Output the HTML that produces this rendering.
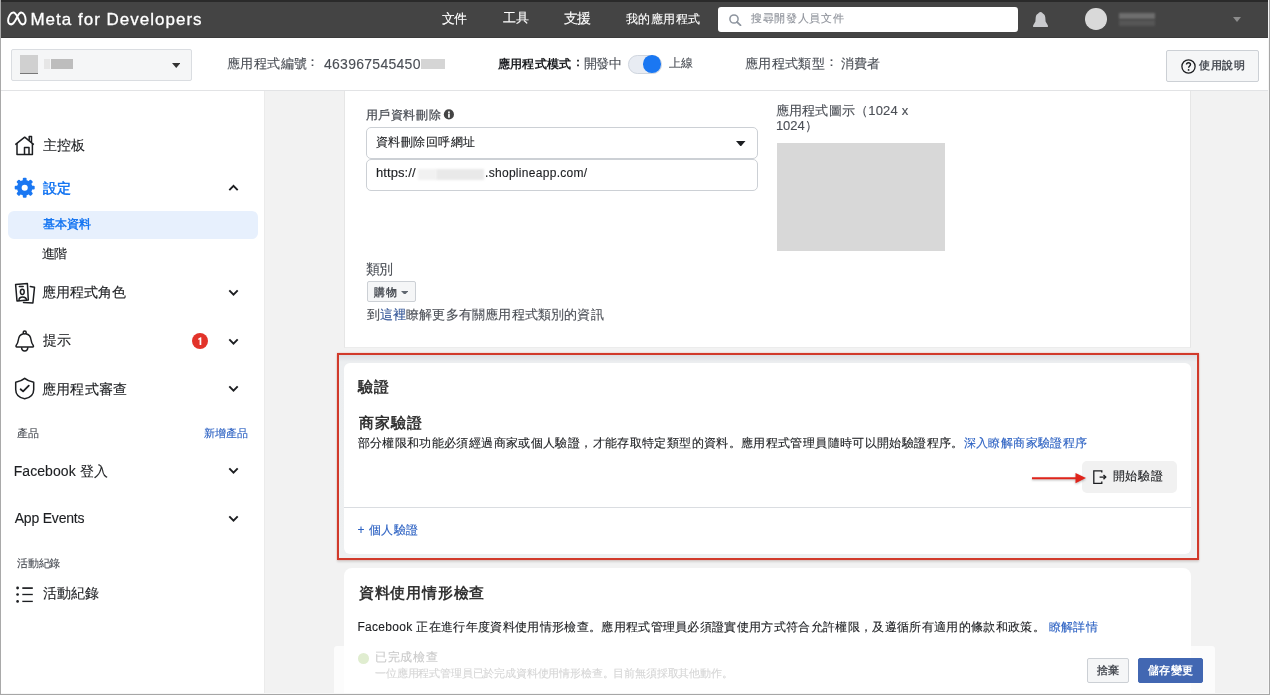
<!DOCTYPE html>
<html><head><meta charset="utf-8">
<style>
*{box-sizing:border-box;margin:0;padding:0}
html,body{width:1270px;height:695px;overflow:hidden}
body{position:relative;background:#f2f2f2;font-family:"Liberation Sans",sans-serif;color:#1c1e21}
.a{position:absolute;white-space:nowrap;line-height:1.25}
.t{-webkit-text-stroke:0.12px currentColor}
#root{position:absolute;left:0;top:0;width:1270px;height:695px;will-change:transform}
</style></head><body><div id="root">
<div class="a" style="left:0;top:0;width:1270px;height:2px;background:#2a2a2a"></div>
<div class="a" style="left:0;top:2px;width:1270px;height:35px;background:#444"></div>
<div class="a" style="left:0;top:37px;width:1270px;height:1px;background:#3b3b3b"></div>
<svg class="a" style="left:4.9px;top:8px" width="30" height="22" viewBox="0 0 33 22" preserveAspectRatio="none"><path d="M9.2 4.5C11.2 4.5 12.4 6.6 13.6 8.8 14.9 11.3 16.6 16.4 19.2 16.4 21.4 16.4 22.7 14.5 22.7 12 22.7 7.9 20.3 4.5 17.8 4.5 15.8 4.5 14.6 6.6 13.6 8.6 12.3 11.1 9.9 16.4 6.7 16.4 4.6 16.4 3.4 14.8 3.4 12.7 3.4 9 6.1 4.5 9.2 4.5Z" fill="none" stroke="#fff" stroke-width="2.1" stroke-linejoin="round"/></svg>
<div class="a" style="left:718px;top:7px;width:300px;height:25px;background:#fff;border-radius:3px"></div>
<svg class="a" style="left:729px;top:14px" width="13" height="12" viewBox="0 0 13 12"><circle cx="5" cy="5" r="4.1" fill="none" stroke="#8d949e" stroke-width="1.5"/><path d="M8 8L11.6 11.3" stroke="#8d949e" stroke-width="1.7" stroke-linecap="round"/></svg>
<svg class="a" style="left:1032px;top:11px" width="17" height="17" viewBox="0 0 17 17"><path d="M8.6 0.9C7.4 0.9 6.8 1.9 6.2 2.4 4.6 3 3.9 4.6 3.7 6.6L3.4 10.6 1.1 14.4V16H15.9V14.4L13.6 10.6 13.3 6.6C13.1 4.6 12.4 3 10.9 2.4 10.3 1.9 9.8 0.9 8.6 0.9Z" fill="#c9cacd"/></svg>
<div class="a" style="left:1085px;top:8px;width:21.5px;height:21.5px;border-radius:50%;background:#d9d9d9"></div>
<div class="a" style="left:1119px;top:13px;width:36px;height:6px;background:#6e6e6e;filter:blur(0.8px)"></div>
<div class="a" style="left:1119px;top:19.5px;width:36px;height:6px;background:#565656;filter:blur(0.8px)"></div>
<svg class="a" style="left:1232.5px;top:17px" width="8" height="5" viewBox="0 0 8 5"><path d="M0 0H8L4.0 5Z" fill="#8c8c8c"/></svg>
<div class="a" style="left:0;top:38px;width:1270px;height:52px;background:#fff"></div>
<div class="a" style="left:0;top:90px;width:1270px;height:1px;background:#e2e3e5"></div>
<div class="a" style="left:11px;top:49px;width:181px;height:32px;background:#f5f6f7;border:1px solid #dadde1;border-radius:2px"></div>
<div class="a" style="left:20px;top:55px;width:18px;height:19px;background:#d0d0d0"></div>
<div class="a" style="left:20px;top:72.5px;width:18px;height:1.2px;background:#777"></div>
<div class="a" style="left:44px;top:59px;width:6px;height:10px;background:#e6e6e6"></div>
<div class="a" style="left:50.5px;top:59px;width:22.5px;height:10px;background:#bdbdbd"></div>
<svg class="a" style="left:171.5px;top:62.5px" width="8.5" height="5" viewBox="0 0 8.5 5"><path d="M0 0H8.5L4.25 5Z" fill="#333"/></svg>
<div class="a" style="left:421px;top:58.5px;width:24px;height:10.5px;background:#d5d5d5"></div>
<div class="a" style="left:628px;top:55px;width:33.5px;height:18.6px;border-radius:9.3px;background:#e8ecf3;border:1px solid #cfd5de"></div>
<div class="a" style="left:643.2px;top:55.4px;width:17.6px;height:17.6px;border-radius:50%;background:#1a77f2"></div>
<div class="a" style="left:1166px;top:50px;width:93px;height:31.5px;background:#f5f6f7;border:1px solid #ccd0d5;border-radius:2px"></div>
<svg class="a" style="left:1180.5px;top:58.5px" width="15" height="15" viewBox="0 0 15 15"><circle cx="7.5" cy="7.5" r="6.6" fill="none" stroke="#1c1e21" stroke-width="1.3"/><path d="M5.5 5.6C5.5 4.4 6.4 3.7 7.5 3.7 8.6 3.7 9.5 4.4 9.5 5.5 9.5 6.9 7.6 7 7.6 8.8" fill="none" stroke="#1c1e21" stroke-width="1.4"/><circle cx="7.6" cy="10.9" r="0.9" fill="#1c1e21"/></svg>
<div class="a" style="left:0;top:91px;width:264px;height:604px;background:#fff"></div>
<div class="a" style="left:264px;top:91px;width:1px;height:604px;background:#ebebeb"></div>
<svg class="a" style="left:10px;top:130px" width="30" height="30" viewBox="0 0 30 30" fill="none" stroke="#1c1e21" stroke-width="1.5" stroke-linejoin="round"><path d="M5.3 14.6L14.7 7.2L23.8 14.6"/><path d="M7 13.2V24.4H22.4V13.2"/><path d="M14.5 24.4V17.6H19V24.4"/><path d="M19.2 10.5V6.4H21.5V12.3"/></svg>
<svg class="a" style="left:10px;top:173px" width="30" height="30" viewBox="-14.7 -14.7 30 30"><g fill="#1a77f2"><rect x="-1.9" y="-10" width="3.8" height="5" rx="1" transform="rotate(0)"/><rect x="-1.9" y="-10" width="3.8" height="5" rx="1" transform="rotate(45)"/><rect x="-1.9" y="-10" width="3.8" height="5" rx="1" transform="rotate(90)"/><rect x="-1.9" y="-10" width="3.8" height="5" rx="1" transform="rotate(135)"/><rect x="-1.9" y="-10" width="3.8" height="5" rx="1" transform="rotate(180)"/><rect x="-1.9" y="-10" width="3.8" height="5" rx="1" transform="rotate(225)"/><rect x="-1.9" y="-10" width="3.8" height="5" rx="1" transform="rotate(270)"/><rect x="-1.9" y="-10" width="3.8" height="5" rx="1" transform="rotate(315)"/><circle r="7.7"/></g><circle r="3.05" fill="#fff"/></svg>
<svg class="a" style="left:227.7px;top:184.4px" width="11" height="8" viewBox="0 0 11 8"><path d="M1.3 6.2L5.5 1.9L9.7 6.2" fill="none" stroke="#1c1e21" stroke-width="1.9"/></svg>
<div class="a" style="left:7.5px;top:211px;width:250.5px;height:28px;background:#e7f0fd;border-radius:6px"></div>
<svg class="a" style="left:10px;top:278px" width="30" height="30" viewBox="0 0 30 30" fill="none" stroke="#1c1e21" stroke-width="1.5" stroke-linecap="round" stroke-linejoin="round"><path d="M5.6 6.4L17.4 5.5L18.3 22L7 22.9Z"/><path d="M9.3 8.4H13.2"/><ellipse cx="12.3" cy="13.8" rx="1.9" ry="2.6"/><path d="M8.9 22.4C9 20 10.3 19 12.6 19 15 19 16.4 20 16.6 22.2"/><path d="M20.3 8.6L24.5 9.3L22.9 25L13.5 24.6"/></svg>
<svg class="a" style="left:227.5px;top:289.3px" width="11" height="8" viewBox="0 0 11 8"><path d="M1.3 1.3L5.5 5.6L9.7 1.3" fill="none" stroke="#1c1e21" stroke-width="1.9"/></svg>
<svg class="a" style="left:10px;top:326px" width="30" height="30" viewBox="0 0 30 30" fill="none" stroke="#1c1e21" stroke-width="1.5" stroke-linejoin="round"><circle cx="14.7" cy="6.5" r="1.5"/><path d="M13.6 7.8C10 8.4 8.5 11.5 8.2 14.5 7.9 17 7.5 17.5 6.2 19.4 5.8 20.2 6 21 6.9 21.1H22.6C23.5 21 23.7 20.2 23.2 19.4 21.9 17.5 21.5 17 21.2 14.5 20.9 11.5 19.4 8.4 15.8 7.8"/><path d="M11.6 21.3C11.6 23.6 13 25 14.7 25 16.4 25 17.8 23.6 17.8 21.3"/></svg>
<div class="a" style="left:191.5px;top:333px;width:16px;height:16px;border-radius:50%;background:#e2332a"></div>
<svg class="a" style="left:191.5px;top:333px" width="16" height="16" viewBox="0 0 16 16"><path d="M6.3 5.6L8.6 4.2H9.3V12H7.6V6.4L6.3 7.1Z" fill="#fff"/></svg>
<svg class="a" style="left:227.5px;top:338.3px" width="11" height="8" viewBox="0 0 11 8"><path d="M1.3 1.3L5.5 5.6L9.7 1.3" fill="none" stroke="#1c1e21" stroke-width="1.9"/></svg>
<svg class="a" style="left:10px;top:374px" width="30" height="30" viewBox="0 0 30 30" fill="none" stroke="#1c1e21" stroke-width="1.5" stroke-linejoin="round" stroke-linecap="round"><path d="M14.7 4.4C12.4 6.4 9 7.6 5.7 8.3V15.5C5.7 20.5 9.5 23.8 14.7 24.8 19.9 23.8 23.7 20.5 23.7 15.5V8.3C20.4 7.6 17 6.4 14.7 4.4Z"/><path d="M10.6 15.3L13.1 17.4L18.8 11.7" stroke-width="1.8"/></svg>
<svg class="a" style="left:227.5px;top:385px" width="11" height="8" viewBox="0 0 11 8"><path d="M1.3 1.3L5.5 5.6L9.7 1.3" fill="none" stroke="#1c1e21" stroke-width="1.9"/></svg>
<svg class="a" style="left:227.7px;top:466.8px" width="11" height="8" viewBox="0 0 11 8"><path d="M1.3 1.3L5.5 5.6L9.7 1.3" fill="none" stroke="#1c1e21" stroke-width="1.9"/></svg>
<svg class="a" style="left:227.7px;top:514.6px" width="11" height="8" viewBox="0 0 11 8"><path d="M1.3 1.3L5.5 5.6L9.7 1.3" fill="none" stroke="#1c1e21" stroke-width="1.9"/></svg>
<svg class="a" style="left:10px;top:580px" width="30" height="30" viewBox="0 0 30 30" fill="#1c1e21" stroke="#1c1e21"><circle cx="7.6" cy="8" r="1.4" stroke="none"/><circle cx="7.6" cy="14.5" r="1.35" stroke="none"/><circle cx="7.6" cy="21.4" r="1.35" stroke="none"/><path d="M12.3 8.1H22.8" stroke-width="1.7"/><path d="M12.3 14.5H22.8" stroke-width="1.35"/><path d="M12.3 21.4H22.8" stroke-width="1.35"/></svg>
<div class="a" style="left:343.5px;top:91px;width:847.5px;height:256.5px;background:#fff;border-left:1px solid #e6e6e6;border-right:1px solid #e6e6e6;border-bottom:1px solid #ececec"></div>
<svg class="a" style="left:443px;top:109px" width="12" height="12" viewBox="0 0 12 12"><circle cx="5.9" cy="5.4" r="5.1" fill="#444"/><rect x="5.1" y="4.6" width="1.7" height="4.1" fill="#fff"/><circle cx="5.95" cy="3.2" r="0.95" fill="#fff"/></svg>
<div class="a" style="left:366px;top:127px;width:392px;height:31.5px;background:#fff;border:1px solid #ccd0d5;border-radius:5px"></div>
<svg class="a" style="left:736px;top:140.5px" width="9.5" height="5.5" viewBox="0 0 9.5 5.5"><path d="M0 0H9.5L4.75 5.5Z" fill="#1c1e21"/></svg>
<div class="a" style="left:366px;top:159px;width:392px;height:31.5px;background:#fff;border:1px solid #ccd0d5;border-radius:5px"></div>
<div class="a" style="left:418px;top:169px;width:18px;height:11px;background:#f1f1f1;filter:blur(1px)"></div>
<div class="a" style="left:436px;top:169px;width:48px;height:11px;background:#e9e9e9;filter:blur(1px)"></div>
<div class="a" style="left:366.5px;top:280.5px;width:49.5px;height:21px;background:#f5f6f7;border:1px solid #ccd0d5;border-radius:2px"></div>
<svg class="a" style="left:400.5px;top:290.5px" width="7.5" height="3.8" viewBox="0 0 7.5 3.8"><path d="M0 0H7.5L3.75 3.8Z" fill="#606770"/></svg>
<div class="a" style="left:777px;top:142.5px;width:168px;height:108px;background:#d8d8d8"></div>
<div class="a" style="left:337px;top:353px;width:861.5px;height:207px;border:2.6px solid #d13a2b;box-shadow:0 0 1.5px rgba(230,90,70,0.45), 0 1.5px 2px rgba(0,0,0,0.12);background:linear-gradient(#dcdee2, #eceef0 7px, #eef0f1)"></div>
<div class="a" style="left:344px;top:362.5px;width:847px;height:191.5px;background:#fff;border-radius:6px"></div>
<div class="a" style="left:344px;top:507px;width:847px;height:1px;background:#dadde1"></div>
<div class="a" style="left:1081.5px;top:461px;width:95px;height:32px;background:#f1f1f1;border-radius:5px"></div>
<svg class="a" style="left:1090px;top:467px" width="20" height="20" viewBox="0 0 20 20" fill="none" stroke="#1c1e21" stroke-width="1.3"><path d="M11.8 5.4V3.8H3.8V16.4H11.8V14.6"/><path d="M9.6 10.1H15.6" /><path d="M13.5 8L15.7 10.1L13.5 12.2" stroke-width="1.4"/></svg>
<svg class="a" style="left:1028px;top:470px;filter:drop-shadow(0 1.5px 1px rgba(0,0,0,0.28))" width="62" height="16" viewBox="0 0 62 16"><path d="M4 8.2H50" stroke="#e0241b" stroke-width="2"/><path d="M47.5 3L58 8.1L47.5 13.2Z" fill="#e0241b"/></svg>
<div class="a" style="left:344px;top:568px;width:847px;height:140px;background:#fff;border-radius:8px"></div>
<div class="a t" style="left:30.4px;top:8.5px;font-size:17px;font-weight:400;letter-spacing:1.006px;color:#fff;-webkit-text-stroke:0.3px #fff;">Meta for Developers</div>
<div class="a t" style="left:441.5px;top:11.3px;font-size:13px;font-weight:400;letter-spacing:-0.3px;color:#fff;">文件</div>
<div class="a t" style="left:502.8px;top:10.3px;font-size:13px;font-weight:400;letter-spacing:0.5px;color:#fff;">工具</div>
<div class="a t" style="left:564px;top:10.3px;font-size:14px;font-weight:400;letter-spacing:-0.7px;color:#fff;">支援</div>
<div class="a t" style="left:625.7px;top:11.8px;font-size:12px;font-weight:400;letter-spacing:0.48px;color:#fff;">我的應用程式</div>
<div class="a t" style="left:750.9px;top:12.4px;font-size:11px;font-weight:400;letter-spacing:0.714px;color:#90949c;">搜尋開發人員文件</div>
<div class="a t" style="left:226.9px;top:56.3px;font-size:13px;font-weight:400;letter-spacing:0.48px;color:#4b4f56;">應用程式編號</div>
<div class="a t" style="left:306.3px;top:53.8px;font-size:13px;font-weight:400;letter-spacing:0px;color:#4b4f56;">：</div>
<div class="a t" style="left:324px;top:56.3px;font-size:14px;font-weight:400;letter-spacing:0.273px;color:#4b4f56;">463967545450</div>
<div class="a" style="left:498.1px;top:56.6px;font-size:12px;font-weight:700;letter-spacing:0.14px;color:#1c1e21;">應用程式模式</div>
<div class="a" style="left:571.6px;top:55.3px;font-size:12.2px;font-weight:700;letter-spacing:0px;color:#1c1e21;">：</div>
<div class="a t" style="left:583.6px;top:55.6px;font-size:13px;font-weight:400;letter-spacing:-0.35px;color:#4b4f56;">開發中</div>
<div class="a t" style="left:669.3px;top:55.6px;font-size:12px;font-weight:400;letter-spacing:0.2px;color:#4b4f56;">上線</div>
<div class="a t" style="left:745px;top:56.3px;font-size:13px;font-weight:400;letter-spacing:0.36px;color:#4b4f56;">應用程式類型</div>
<div class="a t" style="left:824.5px;top:53.8px;font-size:13px;font-weight:400;letter-spacing:0px;color:#4b4f56;">：</div>
<div class="a t" style="left:841px;top:56.3px;font-size:13px;font-weight:400;letter-spacing:0.1px;color:#4b4f56;">消費者</div>
<div class="a" style="left:1199px;top:59.1px;font-size:11px;font-weight:700;letter-spacing:0.667px;color:#4b4f56;">使用說明</div>
<div class="a t" style="left:43.2px;top:137.1px;font-size:14px;font-weight:400;letter-spacing:-0.1px;color:#1c1e21;">主控板</div>
<div class="a" style="left:42.8px;top:179.7px;font-size:14px;font-weight:700;letter-spacing:0.2px;color:#1877f2;">設定</div>
<div class="a" style="left:42.5px;top:217.3px;font-size:12px;font-weight:700;letter-spacing:0.3px;color:#1877f2;">基本資料</div>
<div class="a t" style="left:41.5px;top:246.3px;font-size:13px;font-weight:400;letter-spacing:-0.5px;color:#1c1e21;">進階</div>
<div class="a t" style="left:41.5px;top:284.3px;font-size:14px;font-weight:400;letter-spacing:0.1px;color:#1c1e21;">應用程式角色</div>
<div class="a t" style="left:42.5px;top:332.2px;font-size:14px;font-weight:400;letter-spacing:0.5px;color:#1c1e21;">提示</div>
<div class="a t" style="left:41.5px;top:381.0px;font-size:14px;font-weight:400;letter-spacing:0.4px;color:#1c1e21;">應用程式審查</div>
<div class="a t" style="left:17px;top:426.7px;font-size:11px;font-weight:400;letter-spacing:0.3px;color:#4b4f56;">產品</div>
<div class="a t" style="left:203.5px;top:426.7px;font-size:11px;font-weight:400;letter-spacing:0.033px;color:#2d62c3;">新增產品</div>
<div class="a t" style="left:13.7px;top:463.2px;font-size:14px;font-weight:400;letter-spacing:0.07px;color:#1c1e21;">Facebook 登入</div>
<div class="a t" style="left:14.7px;top:510.3px;font-size:14px;font-weight:400;letter-spacing:-0.2px;color:#1c1e21;">App Events</div>
<div class="a t" style="left:17.3px;top:556.6px;font-size:11px;font-weight:400;letter-spacing:-0.3px;color:#4b4f56;">活動紀錄</div>
<div class="a t" style="left:42.5px;top:585.3px;font-size:14px;font-weight:400;letter-spacing:0.1px;color:#1c1e21;">活動紀錄</div>
<div class="a t" style="left:365.7px;top:108.1px;font-size:12px;font-weight:400;letter-spacing:0.58px;color:#4b4f56;-webkit-text-stroke:0.25px #4b4f56;">用戶資料刪除</div>
<div class="a t" style="left:375.7px;top:135.3px;font-size:12px;font-weight:400;letter-spacing:0.471px;color:#1c1e21;">資料刪除回呼網址</div>
<div class="a t" style="left:376px;top:164.8px;font-size:13px;font-weight:400;letter-spacing:0.071px;color:#1c1e21;">https://</div>
<div class="a t" style="left:485px;top:165.8px;font-size:12px;font-weight:400;letter-spacing:0.3px;color:#1c1e21;">.shoplineapp.com/</div>
<div class="a t" style="left:365.6px;top:260.5px;font-size:14px;font-weight:400;letter-spacing:-0.5px;color:#4b4f56;">類別</div>
<div class="a" style="left:374.3px;top:286.1px;font-size:11px;font-weight:700;letter-spacing:0.5px;color:#4b4f56;">購物</div>
<div class="a t" style="left:366.6px;top:306.9px;font-size:13px;font-weight:400;letter-spacing:0.176px;color:#4b4f56;">到<span style='color:#365899'>這裡</span>瞭解更多有關應用程式類別的資訊</div>
<div class="a t" style="left:775.9px;top:103.4px;font-size:13px;font-weight:400;letter-spacing:0.196px;color:#4b4f56;">應用程式圖示（1024 x</div>
<div class="a t" style="left:775.9px;top:117.9px;font-size:13px;font-weight:400;letter-spacing:0px;color:#4b4f56;">1024）</div>
<div class="a" style="left:358px;top:377.8px;font-size:15px;font-weight:700;letter-spacing:1.0px;color:#333333;">驗證</div>
<div class="a" style="left:358.5px;top:414.3px;font-size:15px;font-weight:700;letter-spacing:1.0px;color:#333333;">商家驗證</div>
<div class="a t" style="left:357.5px;top:435.5px;font-size:12px;font-weight:400;letter-spacing:0.371px;color:#1c1e21;">部分權限和功能必須經過商家或個人驗證，才能存取特定類型的資料。應用程式管理員隨時可以開始驗證程序。<span style='color:#2d62c3'>深入瞭解商家驗證程序</span></div>
<div class="a t" style="left:357.5px;top:523.2px;font-size:12px;font-weight:400;letter-spacing:0.48px;color:#2d62c3;">+ 個人驗證</div>
<div class="a t" style="left:1112.7px;top:469.0px;font-size:12px;font-weight:400;letter-spacing:0.733px;color:#1c1e21;">開始驗證</div>
<div class="a" style="left:358.7px;top:583.6px;font-size:15px;font-weight:700;letter-spacing:0.814px;color:#333333;">資料使用情形檢查</div>
<div class="a t" style="left:357.4px;top:619.5px;font-size:12px;font-weight:400;letter-spacing:0.325px;color:#1c1e21;">Facebook 正在進行年度資料使用情形檢查。應用程式管理員必須證實使用方式符合允許權限，及遵循所有適用的條款和政策。 <span style='color:#2d62c3'>瞭解詳情</span></div>
<div class="a" style="left:334px;top:645.5px;width:881px;height:50px;background:rgba(255,255,255,0.72);border-radius:3px 3px 0 0"></div>
<div class="a" style="left:358px;top:653px;width:11px;height:10.5px;border-radius:50%;background:#e0edd0"></div>
<div class="a" style="left:1087px;top:658px;width:42px;height:24.5px;background:#f5f6f7;border:1px solid #ccd0d5;border-radius:2px"></div>
<div class="a" style="left:1138px;top:658px;width:65px;height:24.5px;background:#4267b2;border:1px solid #4267b2;border-radius:2px"></div>
<div class="a t" style="left:375.2px;top:650.3px;font-size:12px;font-weight:400;letter-spacing:0.65px;color:#cacaca;">已完成檢查</div>
<div class="a t" style="left:375px;top:667.3px;font-size:11px;font-weight:400;letter-spacing:-0.166px;color:#d6d6d6;">一位應用程式管理員已於完成資料使用情形檢查。目前無須採取其他動作。</div>
<div class="a" style="left:1097px;top:663.5px;font-size:11px;font-weight:700;letter-spacing:-0.5px;color:#4b4f56;">捨棄</div>
<div class="a" style="left:1148px;top:663.5px;font-size:11px;font-weight:700;letter-spacing:0.267px;color:#fff;">儲存變更</div>
<div class="a" style="left:0;top:0;width:1px;height:695px;background:#a9a9a9"></div>
<div class="a" style="left:1268px;top:0;width:1px;height:694px;background:#f7f7f7"></div>
<div class="a" style="left:1269px;top:0;width:1px;height:695px;background:#a6a6a6"></div>
<div class="a" style="left:1px;top:693px;width:1268px;height:1px;background:#f7f7f7"></div>
<div class="a" style="left:0;top:694px;width:1270px;height:1px;background:#a6a6a6"></div>
</div></body></html>
